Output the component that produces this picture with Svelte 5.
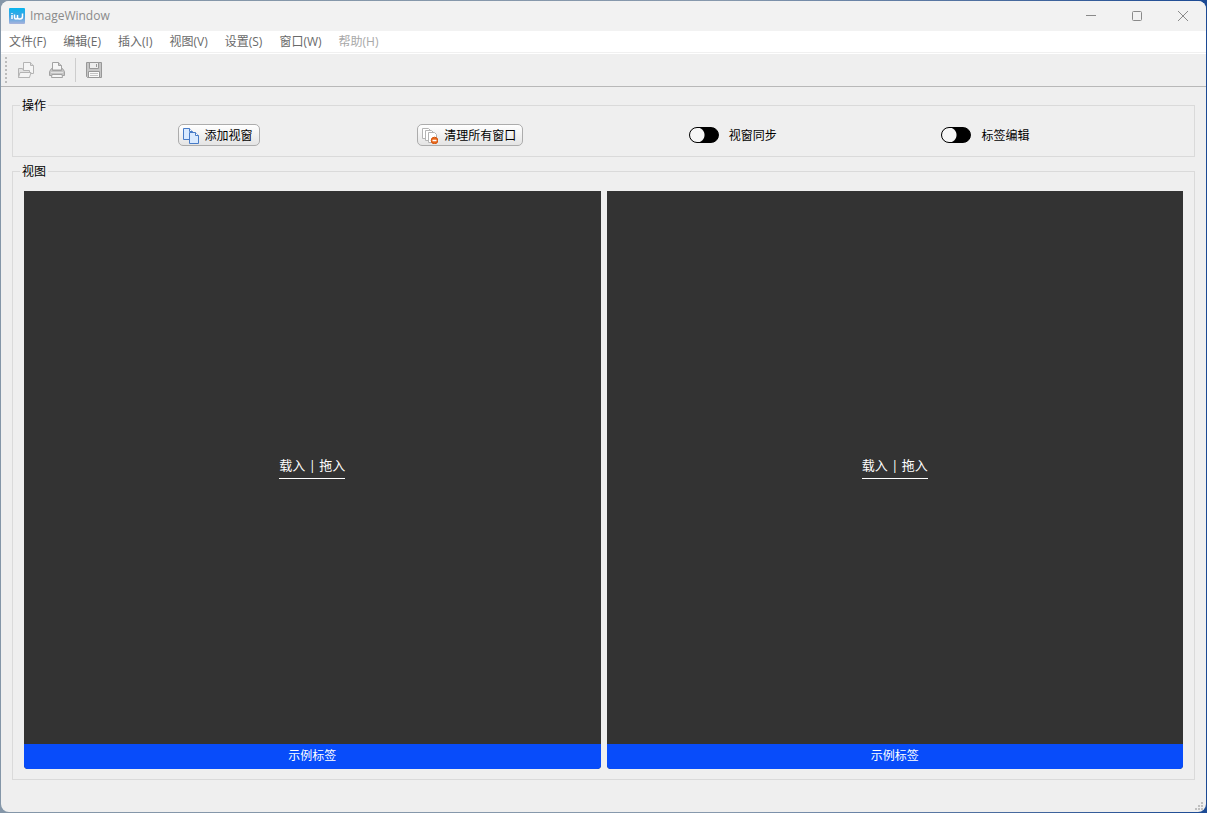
<script lang="ts">
    const menus = [
        { label: '文件(F)' },
        { label: '编辑(E)' },
        { label: '插入(I)' },
        { label: '视图(V)' },
        { label: '设置(S)' },
        { label: '窗口(W)' },
        { label: '帮助(H)', disabled: true }
    ];

    let views = $state([
        { id: 1, label: '示例标签' },
        { id: 2, label: '示例标签' }
    ]);
    let nextId = 3;
    let syncViews = $state(false);
    let editLabels = $state(false);

    function addView() {
        views.push({ id: nextId++, label: '示例标签' });
    }

    function clearViews() {
        views = [];
    }
</script>

<div class="desktop">
    <div class="window">
        <header class="titlebar">
            <svg class="titlebar__logo" viewBox="0 0 16 16" aria-hidden="true">
                <defs>
                    <linearGradient id="logo-fill" x1="0" y1="0" x2="0" y2="1">
                        <stop offset="0" stop-color="#08b5ee" />
                        <stop offset="0.5" stop-color="#3fa4e4" />
                        <stop offset="1" stop-color="#a9b4dc" />
                    </linearGradient>
                </defs>
                <rect width="16" height="16" rx="1" fill="url(#logo-fill)" />
                <path d="M3 7v4M5.500 6.500v3q0 1.500 1.500 1.500t1.500-1.500V7M8.500 9.500q0 1.500 1.500 1.500h1q2.500 0 2.500-2.500V5.500" fill="none" stroke="#fff" stroke-width="1.500" />
                <path d="M2.300 5.500h1.400" stroke="#fff" />
            </svg>
            <h1>ImageWindow</h1>
            <div class="titlebar__controls">
                <button type="button" aria-label="最小化">
                    <svg viewBox="0 0 12 12"><path d="M1 5.500h10" /></svg>
                </button>
                <button type="button" aria-label="最大化">
                    <svg viewBox="0 0 12 12"><rect x="1.500" y="1.500" width="9" height="9" rx="1" /></svg>
                </button>
                <button type="button" aria-label="关闭">
                    <svg viewBox="0 0 12 12"><path d="M1 1l10 10M11 1L1 11" /></svg>
                </button>
            </div>
        </header>

        <nav class="menubar">
            {#each menus as menu}
                <button type="button" disabled={menu.disabled}>{menu.label}</button>
            {/each}
        </nav>

        <div class="toolbar">
            <span class="toolbar__grip"></span>
            <button type="button" aria-label="打开">
                <svg viewBox="0 0 16 16" fill="#eee" stroke="#b4b4b4">
                    <path d="M5.500 10V.5h7l3 3v8h-10z" fill="#f5f5f5" />
                    <path d="M12.500.5v3h3" fill="#ddd" />
                    <path d="M.5 15.500v-9h4l1 2h6v7z" fill="#e2e2e2" />
                    <path d="M.5 15.500l1.500-5h11l-1.500 5z" fill="#f4f4f4" />
                </svg>
            </button>
            <button type="button" aria-label="打印">
                <svg viewBox="0 0 16 16" fill="#ddd" stroke="#a2a2a2">
                    <path d="M3.500 8V.5h6l3 3V8z" fill="#f6f6f6" />
                    <path d="M9.500.5v3h3" fill="#ccc" />
                    <path d="M2.500 6.500h1v2h9v-2h1l2 3v4h-15v-4z" fill="#c4c4c4" />
                    <path d="M3 12.500h10l.5 3h-11z" fill="#f6f6f6" />
                    <path d="M2 10.500h12" stroke="#e2e2e2" />
                </svg>
            </button>
            <span class="toolbar__separator"></span>
            <button type="button" aria-label="保存">
                <svg viewBox="0 0 16 16" stroke="#989898">
                    <path d="M.5.5h15v15H1.500l-1-1z" fill="#c6c6c6" />
                    <path d="M3.500.5h9v6h-9z" fill="#ededed" />
                    <path d="M2.500 9.500h11v6h-11z" fill="#fafafa" />
                    <path d="M4 11.500h8M4 13.500h8" stroke="#c4c4c4" />
                    <path d="M10.500 2v3" />
                </svg>
            </button>
        </div>

        <main>
            <fieldset class="actions">
                <legend>操作</legend>
                <div class="actions__row">
                    <button class="push" type="button" onclick={addView}>
                        <svg viewBox="0 0 16 16" fill="#d9eaff" stroke="#477bc7" aria-hidden="true">
                            <path d="M.5.5h6l3 3v8h-9z" />
                            <path d="M6.500.5v3h3" fill="#fff" />
                            <path d="M6.500 4.500h6l3 3v8h-9z" />
                            <path d="M12.500 4.500v3h3" fill="#fff" />
                        </svg>
                        添加视窗
                    </button>
                    <button class="push" type="button" onclick={clearViews}>
                        <svg viewBox="0 0 16 16" fill="#fff" stroke="#b4b4b4" aria-hidden="true">
                            <path d="M.5.5h6l2 2v8h-8z" />
                            <path d="M3.500 2.500h6l2 2v8h-8z" />
                            <path d="M6.500 4.500h6l2 2v8h-8z" />
                            <circle cx="12.500" cy="12.500" r="3.300" fill="#e9681c" stroke="#d2560f" />
                            <path d="M10.500 12.500h4" stroke="#fff" stroke-width="1.300" />
                        </svg>
                        清理所有窗口
                    </button>
                    <label class="switch">
                        <input type="checkbox" bind:checked={syncViews} />
                        <span>视窗同步</span>
                    </label>
                    <label class="switch">
                        <input type="checkbox" bind:checked={editLabels} />
                        <span>标签编辑</span>
                    </label>
                </div>
            </fieldset>

            <fieldset class="views">
                <legend>视图</legend>
                <div class="views__grid">
                    {#each views as view (view.id)}
                        <section class="view">
                            <div class="view__canvas">
                                <button type="button">载入 | 拖入</button>
                            </div>
                            <div class="view__label">{view.label}</div>
                        </section>
                    {/each}
                </div>
            </fieldset>
        </main>

        <footer class="statusbar">
            <svg viewBox="0 0 8 8" fill="#bfbfbf" aria-hidden="true">
                <path d="M6 0h2v2H6zM3 3h2v2H3zM6 3h2v2H6zM0 6h2v2H0zM3 6h2v2H3zM6 6h2v2H6z" />
            </svg>
        </footer>
    </div>
</div>

<style>
    :global(body) {
        margin: 0;
    }

    .desktop {
        display: flex;
        box-sizing: border-box;
        min-height: 100vh;
        padding: 1px;
        background: linear-gradient(90deg, #8496a8, #8799ad 60%, #1c4a94);
        font-family: 'Open Sans', 'Noto Sans CJK SC', sans-serif;
        font-size: 12px;
        line-height: 16px;
        color: #000;
    }

    .window {
        display: flex;
        flex: 1;
        flex-direction: column;
        min-width: 0;
        overflow: hidden;
        border-radius: 8px;
        background: #efefef;
    }

    button {
        margin: 0;
        padding: 0;
        border: none;
        background: none;
        color: inherit;
        font: inherit;
    }

    svg {
        display: block;
        width: 16px;
        height: 16px;
    }

    .titlebar {
        display: flex;
        align-items: center;
        gap: 5px;
        height: 30px;
        padding-left: 8px;
        background: #f2f2f2;
        color: #8a8a8a;
    }

    h1 {
        flex: 1;
        margin: 0;
        font-size: 12px;
        font-weight: 400;
    }

    .titlebar__controls {
        display: flex;
    }

    .titlebar__controls button {
        display: grid;
        place-items: center;
        width: 46px;
        height: 30px;
    }

    .titlebar__controls svg {
        width: 12px;
        height: 12px;
        fill: none;
        stroke: #8a8a8a;
    }

    .menubar {
        display: flex;
        gap: 1px;
        height: 21px;
        background: #fff;
        border-bottom: 1px solid #f0f0f0;
        color: #6a6a6a;
    }

    .menubar button {
        padding: 0 8px;
    }

    .menubar button:disabled {
        color: #a8a8a8;
    }

    .toolbar {
        display: flex;
        align-items: center;
        height: 32px;
        padding-left: 4px;
        border-top: 1px solid #fff;
        border-bottom: 1px solid #b8b8b8;
    }

    .toolbar__grip {
        width: 2px;
        height: 26px;
        margin-right: 11px;
        background: repeating-linear-gradient(#bcbcbc 0 2px, transparent 2px 4px);
    }

    .toolbar button {
        margin-right: 15px;
    }

    .toolbar__separator {
        width: 1px;
        height: 24px;
        margin: 0 10px 0 -5px;
        background: #cdcdcd;
    }

    main {
        display: flex;
        flex: 1;
        flex-direction: column;
        gap: 5px;
        padding: 9px 11px 0;
    }

    fieldset {
        min-width: 0;
        margin: 0;
        border: 1px solid #dadada;
    }

    legend {
        margin-left: 7px;
        padding: 2px 2px 0;
    }

    .actions {
        padding: 10px 0;
    }

    .actions__row {
        display: grid;
        grid-template-columns: 165fr auto 158fr auto 166fr auto 165fr auto 165fr;
        align-items: center;
    }

    .actions__row > :nth-child(1) {
        grid-column: 2;
    }

    .actions__row > :nth-child(2) {
        grid-column: 4;
    }

    .actions__row > :nth-child(3) {
        grid-column: 6;
    }

    .actions__row > :nth-child(4) {
        grid-column: 8;
    }

    .push {
        display: flex;
        align-items: center;
        gap: 6px;
        height: 22px;
        padding: 2px 6px 0 4px;
        border: 1px solid #acacac;
        border-radius: 5px;
        background: linear-gradient(#fff, #e4e4e4);
    }

    .push:active {
        background: #dcdcdc;
    }

    .switch {
        display: flex;
        align-items: center;
        gap: 10px;
    }

    .switch span {
        padding-top: 2px;
    }

    .switch input {
        appearance: none;
        width: 30px;
        height: 16px;
        margin: 0;
        border: 1px solid #000;
        border-radius: 8px;
        background: radial-gradient(circle at 7px 7px, #f6f6f6 7px, #000 8px);
    }

    .switch input:checked {
        background: radial-gradient(circle at 21px 7px, #f6f6f6 7px, #000 8px);
    }

    .views {
        display: flex;
        flex: 1;
        flex-direction: column;
        padding: 11px 0 10px;
    }

    .views__grid {
        display: grid;
        flex: 1;
        grid-auto-flow: column;
        grid-auto-columns: 1fr;
        gap: 6px;
        margin: 0 11px;
    }

    .view {
        display: flex;
        flex-direction: column;
        overflow: hidden;
        border-radius: 0 0 4px 4px;
        background: #333;
        color: #fff;
    }

    .view__canvas {
        display: flex;
        flex: 1;
        align-items: center;
        justify-content: center;
    }

    .view__canvas button {
        padding-bottom: 5px;
        border-bottom: 1px solid #fff;
        font-size: 13px;
    }

    .view__label {
        padding: 4px 0 5px;
        background: #084cfa;
        text-align: center;
    }

    .statusbar {
        display: flex;
        align-items: flex-end;
        justify-content: flex-end;
        height: 32px;
    }

    .statusbar svg {
        width: 8px;
        height: 8px;
        margin: 0 3px 2px 0;
    }
</style>
